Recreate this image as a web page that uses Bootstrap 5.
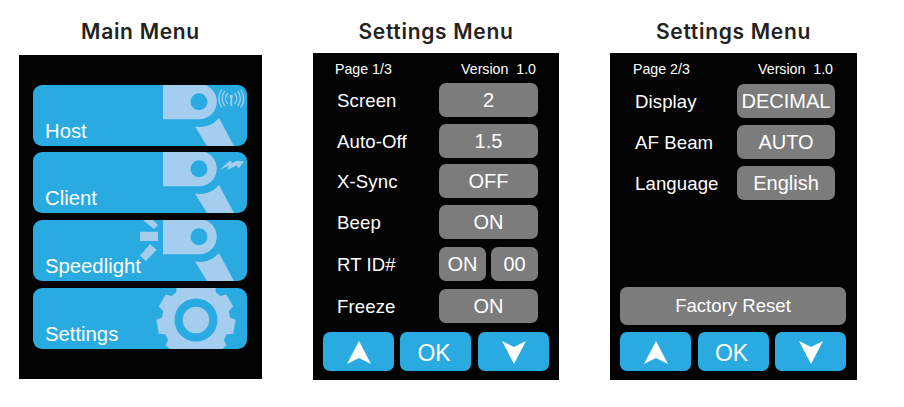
<!DOCTYPE html>
<html lang="en">
<head>
    <meta charset="UTF-8">
    <meta name="viewport" content="width=device-width, initial-scale=1.0">
    <title>Menu Screens</title>
    <link href="https://cdn.jsdelivr.net/npm/bootstrap@5.3.0/dist/css/bootstrap.min.css" rel="stylesheet">
    <style>
        body {
            background: #fff;
            font-family: "Liberation Sans", Arial, sans-serif;
            color: #fff;
        }
        .screens { padding-left: 19px; gap: 51px; }
        .screen-title {
            height: 53px;
            padding-top: 19px;
            font: 600 21px/26px Inter, sans-serif;
            letter-spacing: .7px;
            color: #222;
            text-align: center;
            white-space: nowrap;
        }
        .lcd-panel { background: #030303; height: 327px; }
        .lcd-main { width: 243px; height: 324px; margin-top: 2px; padding: 30px 15px 0 14px; }
        .lcd-set { width: 246px; padding: 0 10px 9px; }
        .lcd-set.wide { width: 247px; padding-right: 11px; }

        .menu-tile {
            position: relative;
            height: 61px;
            margin-bottom: 7px;
            background: #29abe2;
            border-radius: 9px;
            overflow: hidden;
        }
        .menu-tile:first-child { margin-bottom: 6px; }
        .menu-tile span {
            position: absolute;
            left: 12px;
            bottom: 3px;
            font-size: 20.3px;
            line-height: 24px;
        }
        .menu-tile svg { position: absolute; left: 0; top: 0; }
        .tile-art { fill: #a5cdee; }

        .page-head {
            height: 30px;
            padding: 1px 13px 0 12px;
            font-size: 14.2px;
            line-height: 30px;
            white-space: nowrap;
        }
        .page-head.wide { height: 31px; padding-left: 13px; }
        .set-row { height: 34px; margin-bottom: 7px; padding: 0 11px 0 14px; }
        .set-row:nth-child(3) { margin-bottom: 6px; }
        .set-row:nth-child(5), .set-row:nth-child(6) { margin-bottom: 8px; }
        .wide .set-row { margin-bottom: 7px; padding-left: 15px; }
        .row-label { padding-top: 2px; font-size: 18.6px; letter-spacing: .1px; white-space: nowrap; }
        .val-btn {
            height: 34px;
            padding: 0;
            border: 0;
            border-radius: 7px;
            background: #7c7c7c;
            color: #fff;
            font-size: 20px;
            line-height: 34px;
        }
        .val-btn:hover { background: #7c7c7c; color: #fff; }
        .val-wide { width: 99px; }
        .wide .val-wide { width: 98px; }
        .val-half { width: 47px; }
        .reset-btn { height: 38px; font-size: 18.6px; line-height: 38px; margin-bottom: 7px; width: 100%; }
        .nav-key {
            width: 71px;
            height: 39px;
            padding: 0;
            border: 0;
            border-radius: 7px;
            background: #29abe2;
            color: #fff;
            font-size: 23px;
        }
        .nav-key:hover { background: #29abe2; color: #fff; }
        .nav-key svg { display: block; margin: 1px auto 0; }
        .nav-ok { padding: 3px 3px 0 0; }
        .lcd-set:not(.wide) .nav-ok { margin-left: -1px; }
    </style>
</head>
<body>

<div class="screens d-flex align-items-start">

    <!-- Main menu -->
    <div>
        <div class="screen-title">Main Menu</div>
        <div class="lcd-main lcd-panel">
            <div class="menu-tile">
                <svg width="214" height="61" viewBox="0 0 214 61">
                    <path class="tile-art" fill-rule="evenodd" d="M130 0H172A17.6 17.6 0 0 1 166 34.2H130ZM166 8.2a8.5 8.5 0 1 0 0 17a8.5 8.5 0 1 0 0-17Z"/>
                    <path class="tile-art" d="M162 41.500A25 25 0 0 0 186 33L201 61H174Z"/>
                    <g fill="none" stroke="#a5cdee" stroke-width="1.300" stroke-linecap="round">
                        <path d="M194.500 8.500a8 8 0 0 0 0 10M191.500 6.500a11.500 11.500 0 0 0 0 14M188.500 5a15 15 0 0 0 0 17"/>
                        <path d="M202 8.500a8 8 0 0 1 0 10M205 6.500a11.500 11.500 0 0 1 0 14M208 5a15 15 0 0 1 0 17"/>
                    </g>
                    <path class="tile-art" d="M197 10h2.600l.5 2.200-.9.700V21h-1.800V12.900l-.9-.7Z"/>
                </svg>
                <span>Host</span>
            </div>
            <div class="menu-tile">
                <svg width="214" height="61" viewBox="0 0 214 61">
                    <path class="tile-art" fill-rule="evenodd" d="M130 0H172A17.6 17.6 0 0 1 166 34.2H130ZM166 8.2a8.5 8.5 0 1 0 0 17a8.5 8.5 0 1 0 0-17Z"/>
                    <path class="tile-art" d="M162 41.500A25 25 0 0 0 186 33L201 61H174Z"/>
                    <path class="tile-art" d="M186.500 18L197 8.500L199 11L204 8.700L211 9.500L205.500 16.500L204 13.500L194 18L196 13.500Z"/>
                </svg>
                <span>Client</span>
            </div>
            <div class="menu-tile">
                <svg width="214" height="61" viewBox="0 0 214 61">
                    <path class="tile-art" fill-rule="evenodd" d="M130 0H172A17.6 17.6 0 0 1 166 34.2H130ZM166 8.2a8.5 8.5 0 1 0 0 17a8.5 8.5 0 1 0 0-17Z"/>
                    <path class="tile-art" d="M162 41.500A25 25 0 0 0 186 33L201 61H174Z"/>
                    <path class="tile-art" d="M110 0H120L125 5L121 9ZM107 11.700H125V21H107ZM117 24.300L123.700 29.700L113 41L107 35.700Z"/>
                </svg>
                <span>Speedlight</span>
            </div>
            <div class="menu-tile">
                <svg width="214" height="61" viewBox="0 0 214 61">
                    <defs><path id="gearTooth" d="M154 0L156-7H170L172 0Z"/></defs>
                    <g class="tile-art">
                        <circle cx="163" cy="32" r="34"/>
                        <use href="#gearTooth" transform="rotate(20 163 32)"/>
                        <use href="#gearTooth" transform="rotate(60 163 32)"/>
                        <use href="#gearTooth" transform="rotate(100 163 32)"/>
                        <use href="#gearTooth" transform="rotate(140 163 32)"/>
                        <use href="#gearTooth" transform="rotate(180 163 32)"/>
                        <use href="#gearTooth" transform="rotate(220 163 32)"/>
                        <use href="#gearTooth" transform="rotate(260 163 32)"/>
                        <use href="#gearTooth" transform="rotate(300 163 32)"/>
                        <use href="#gearTooth" transform="rotate(340 163 32)"/>
                    </g>
                    <circle cx="163" cy="32" r="17.400" fill="none" stroke="#29abe2" stroke-width="8.200"/>
                </svg>
                <span>Settings</span>
            </div>
        </div>
    </div>

    <!-- Settings page 1 -->
    <div>
        <div class="screen-title">Settings Menu</div>
        <div class="lcd-set lcd-panel d-flex flex-column">
            <div class="page-head d-flex justify-content-between"><span>Page 1/3</span><span>Version&nbsp; 1.0</span></div>
            <div class="set-row d-flex justify-content-between align-items-center"><span class="row-label">Screen</span><button class="btn val-btn val-wide">2</button></div>
            <div class="set-row d-flex justify-content-between align-items-center"><span class="row-label">Auto-Off</span><button class="btn val-btn val-wide">1.5</button></div>
            <div class="set-row d-flex justify-content-between align-items-center"><span class="row-label">X-Sync</span><button class="btn val-btn val-wide">OFF</button></div>
            <div class="set-row d-flex justify-content-between align-items-center"><span class="row-label">Beep</span><button class="btn val-btn val-wide">ON</button></div>
            <div class="set-row d-flex justify-content-between align-items-center"><span class="row-label">RT ID#</span>
                <div class="d-flex val-wide justify-content-between"><button class="btn val-btn val-half">ON</button><button class="btn val-btn val-half">00</button></div>
            </div>
            <div class="set-row d-flex justify-content-between align-items-center"><span class="row-label">Freeze</span><button class="btn val-btn val-wide">ON</button></div>
            <div class="d-flex justify-content-between mt-auto">
                <button class="btn nav-key" aria-label="Up"><svg width="24" height="23" viewBox="0 0 24 23"><path fill="#fff" d="M12 0L24 23L12 17L0 23Z"/></svg></button>
                <button class="btn nav-key nav-ok">OK</button>
                <button class="btn nav-key" aria-label="Down"><svg width="24" height="23" viewBox="0 0 24 23"><path fill="#fff" d="M0 0L12 6L24 0L12 23Z"/></svg></button>
            </div>
        </div>
    </div>

    <!-- Settings page 2 -->
    <div>
        <div class="screen-title">Settings Menu</div>
        <div class="lcd-set wide lcd-panel d-flex flex-column">
            <div class="page-head wide d-flex justify-content-between"><span>Page 2/3</span><span>Version&nbsp; 1.0</span></div>
            <div class="set-row d-flex justify-content-between align-items-center"><span class="row-label">Display</span><button class="btn val-btn val-wide">DECIMAL</button></div>
            <div class="set-row d-flex justify-content-between align-items-center"><span class="row-label">AF Beam</span><button class="btn val-btn val-wide">AUTO</button></div>
            <div class="set-row d-flex justify-content-between align-items-center"><span class="row-label">Language</span><button class="btn val-btn val-wide">English</button></div>
            <div class="mt-auto">
                <button class="btn val-btn reset-btn">Factory Reset</button>
                <div class="d-flex justify-content-between">
                    <button class="btn nav-key" aria-label="Up"><svg width="24" height="23" viewBox="0 0 24 23"><path fill="#fff" d="M12 0L24 23L12 17L0 23Z"/></svg></button>
                    <button class="btn nav-key nav-ok">OK</button>
                    <button class="btn nav-key" aria-label="Down"><svg width="24" height="23" viewBox="0 0 24 23"><path fill="#fff" d="M0 0L12 6L24 0L12 23Z"/></svg></button>
                </div>
            </div>
        </div>
    </div>

</div>

<script src="https://cdn.jsdelivr.net/npm/bootstrap@5.3.0/dist/js/bootstrap.bundle.min.js"></script>
</body>
</html>
